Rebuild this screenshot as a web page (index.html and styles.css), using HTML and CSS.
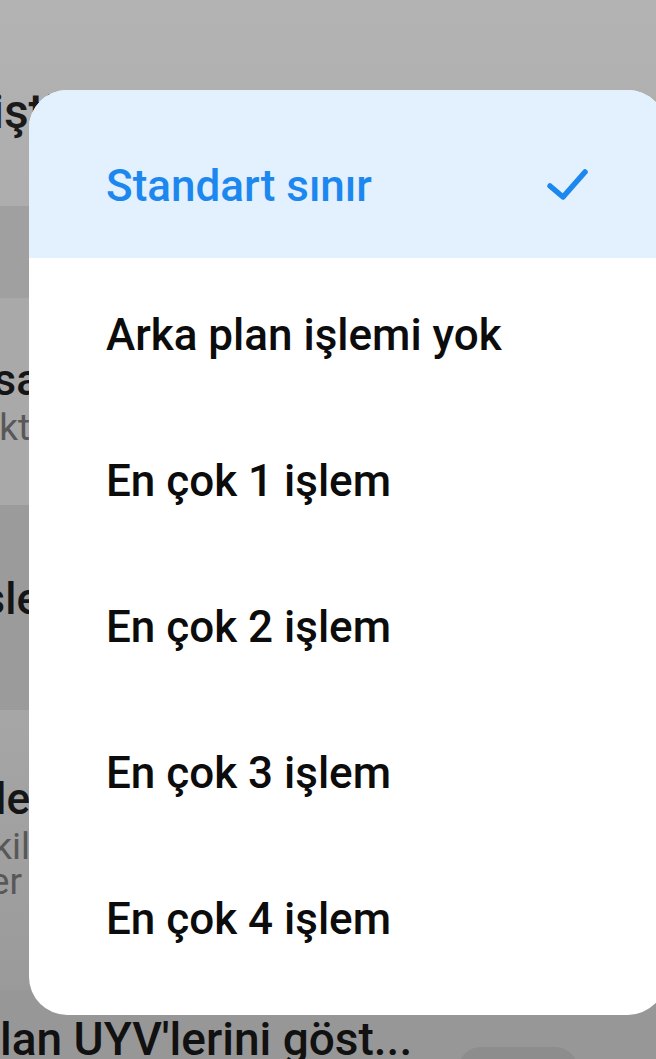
FILE: index.html
```html
<html>
<head>
    <title>Arka plan işlem sınırı</title>
    <link rel="stylesheet" href="styles.css">
</head>
<body>

<!-- Arka plandaki ayarlar sayfası (karartılmış) -->
<div class="page">
    <div class="header">
        <h1 class="page-title">Geliştirici seçenekleri</h1>
    </div>
    <div class="band"></div>

    <div class="row row-light row-a">
        <div class="tail title-tail">Kısa</div>
        <div class="tail sub-tail">Akt</div>
    </div>

    <div class="row row-dark row-b">
        <div class="tail title-tail">İşle</div>
    </div>

    <div class="row row-light row-c">
        <div class="tail title-tail narrow">Etkile</div>
        <div class="tail sub-tail narrow">Etkil</div>
        <div class="tail sub-tail short">gider</div>
    </div>

    <div class="row row-light row-d">
        <div class="anr-title">lan UYV'lerini göst...</div>
        <div class="toggle"></div>
    </div>
</div>

<!-- Açılır seçim menüsü -->
<div class="menu">
    <div class="option selected">
        <span>Standart sınır</span>
        <svg class="check" width="44" height="44" viewBox="0 0 44 44">
            <polyline points="6,22 19,33 41,8" fill="none" stroke="#1c88ef" stroke-width="5.5" stroke-linecap="round" stroke-linejoin="round"/>
        </svg>
    </div>
    <div class="option"><span>Arka plan işlemi yok</span></div>
    <div class="option"><span>En çok 1 işlem</span></div>
    <div class="option"><span>En çok 2 işlem</span></div>
    <div class="option"><span>En çok 3 işlem</span></div>
    <div class="option"><span>En çok 4 işlem</span></div>
</div>

</body>
</html>
```

FILE: styles.css
```css
/* Osnovni stil stranice */
body {
    margin: 0;
    width: 656px;
    height: 1059px;
    overflow: hidden;
    position: relative;
    background-color: #a3a3a3;
    font-family: Roboto, 'Noto Sans', sans-serif;
    color: #111;
}

/* Zatamnjena stranica u pozadini */
.page {
    display: flex;
    flex-direction: column;
}

.header {
    height: 206px;
    background: linear-gradient(#b3b3b3, #adadad);
    display: flex;
    flex-direction: column;
    justify-content: flex-end;
}

.page-title {
    margin: 0 0 70px -79px;
    font-size: 48px;
    font-weight: 500;
    line-height: 48px;
    white-space: nowrap;
    color: #1a1a1a;
}

.band {
    height: 92px;
    background-color: #a0a0a0;
}

.row {
    display: flex;
    flex-direction: column;
}

.row-light {
    background-color: #a9a9a9;
}

.row-dark {
    background-color: #9b9b9b;
}

.row-a {
    height: 207px;
    padding-top: 56px;
    box-sizing: border-box;
}

.row-b {
    height: 205px;
    padding-top: 68px;
    box-sizing: border-box;
}

.row-c {
    height: 280px;
    padding-top: 63px;
    box-sizing: border-box;
    background: linear-gradient(#a6a6a6, #9a9a9a);
}

.row-d {
    flex: 1;
    height: 80px;
    background-color: #979797;
    display: flex;
    flex-direction: row;
    align-items: flex-start;
}

/* Krajevi teksta koji vire ispod menija */
.tail {
    width: 40px;
    display: flex;
    justify-content: flex-end;
    white-space: nowrap;
}

.tail.narrow {
    width: 30px;
}

.title-tail {
    font-size: 44px;
    font-weight: 500;
    line-height: 52px;
    color: #151515;
}

.sub-tail {
    font-size: 37px;
    line-height: 35px;
    color: #585858;
    margin-top: 4px;
}

.row-a .sub-tail {
    width: 30px;
}

.sub-tail.short {
    width: 22px;
    margin-top: 0;
}

.anr-title {
    font-size: 46px;
    font-weight: 500;
    line-height: 52px;
    margin-top: 23px;
    white-space: nowrap;
    color: #111;
}

.toggle {
    width: 120px;
    height: 46px;
    margin: 57px 0 0 46px;
    border-radius: 23px;
    background-color: #8d8d8d;
}

/* Meni sa opcijama */
.menu {
    position: absolute;
    left: 29px;
    top: 90px;
    width: 637px;
    padding-bottom: 27px;
    background-color: #ffffff;
    border-radius: 38px;
    overflow: hidden;
}

.option {
    height: 146px;
    padding: 8px 78px 0 77px;
    box-sizing: border-box;
    display: flex;
    align-items: center;
    justify-content: space-between;
    font-size: 44px;
    font-weight: 500;
    color: #0c0c0c;
}

.option.selected {
    height: 168px;
    padding-top: 24px;
    background-color: #e3f0fd;
    color: #1c88ef;
}

.check {
    display: block;
}
```
